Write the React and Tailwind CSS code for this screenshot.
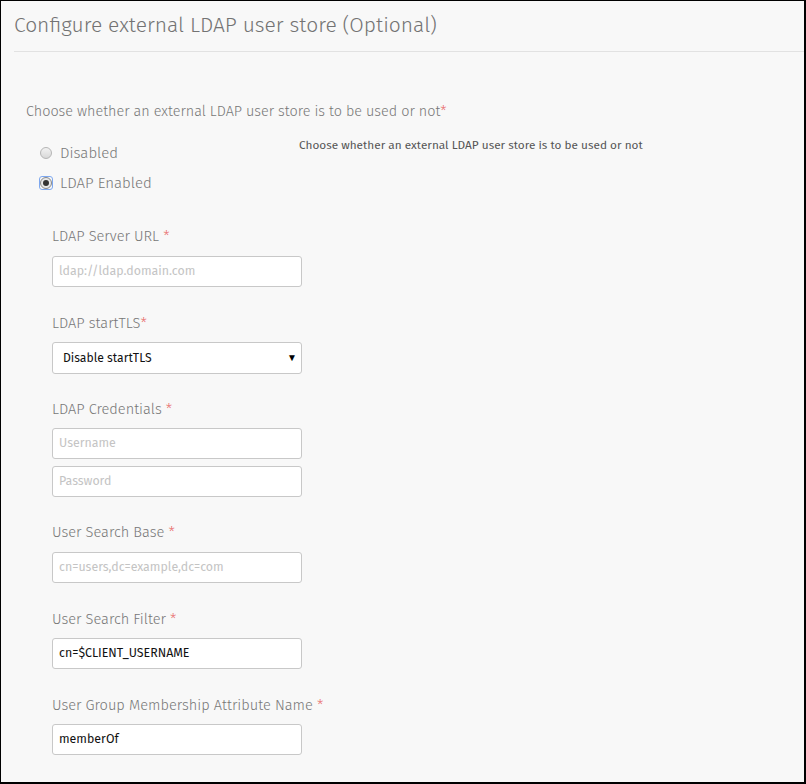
import React from "react";

const font = { fontFamily: '"Fira Sans", "Open Sans", "Noto Sans", sans-serif' };

function Label({ children, star = true, tight = false }) {
  return (
    <div className="text-[14.6px] leading-[20px] text-[#777] font-light">
      {children}
      {star && <span className="text-[#e86a6a]">{tight ? "*" : " *"}</span>}
    </div>
  );
}

function Input({ placeholder, value }) {
  return (
    <div className="w-[250px] h-[31px] bg-white border border-[#c8c8c8] rounded-[3px] flex items-center px-[6px] text-[12.4px]">
      {value ? (
        <span className="text-[#111]">{value}</span>
      ) : (
        <span className="text-[#c4c4c4]">{placeholder}</span>
      )}
    </div>
  );
}

export default function App() {
  return (
    <div
      className="w-[806px] h-[784px] bg-[#f8f8f8] border-l border-t border-r-2 border-b-2 border-black overflow-hidden box-border"
      style={font}
    >
      <div className="ml-[13px] border-b border-[#e2e2e2] h-[51px] pt-[10px]">
        <div className="text-[21px] leading-[28px] text-[#737373] font-light">
          Configure external LDAP user store (Optional)
        </div>
      </div>
      <div className="pl-[25px] pt-[50px]">
        <div className="text-[14.4px] leading-[20px] text-[#777] font-light">
          Choose whether an external LDAP user store is to be used or not
          <span className="text-[#e86a6a]">*</span>
        </div>
        <div className="flex mt-[16px]">
          <div className="w-[273px] pl-[14px]">
            <div className="flex items-center h-[30px] gap-[8px]">
              <div className="w-[12px] h-[12px] rounded-full border border-[#b5b5b5] bg-gradient-to-b from-[#f2f2f2] to-[#d8d8d8]" />
              <span className="text-[15px] text-[#777] font-light">Disabled</span>
            </div>
            <div className="flex items-center h-[30px] gap-[7px]">
              <div className="w-[14px] h-[14px] rounded-[3px] border border-[#7ea8ef] flex items-center justify-center -ml-[1px]">
                <div className="w-[12px] h-[12px] rounded-full border border-[#888] bg-[#e8e8e8] flex items-center justify-center">
                  <div className="w-[6px] h-[6px] rounded-full bg-[#333]" />
                </div>
              </div>
              <span className="text-[15px] text-[#777] font-light">LDAP Enabled</span>
            </div>
          </div>
          <div className="text-[11.8px] text-[#555] leading-[16px] -mt-[1px]">
            Choose whether an external LDAP user store is to be used or not
          </div>
        </div>
        <div className="pl-[26px] pt-[28px]">
          <Label>LDAP Server URL</Label>
          <div className="mt-[10px]"><Input placeholder="ldap://ldap.domain.com" /></div>
          <div className="mt-[26px]"><Label tight>LDAP startTLS</Label></div>
          <div className="mt-[9px] w-[250px] h-[32px] bg-white border border-[#c8c8c8] rounded-[3px] flex items-center justify-between pl-[10px] pr-[4px] text-[12.2px] text-[#111]">
            <span>Disable startTLS</span>
            <span className="text-[10px] text-black">▼</span>
          </div>
          <div className="mt-[25px]"><Label>LDAP Credentials</Label></div>
          <div className="mt-[9px]"><Input placeholder="Username" /></div>
          <div className="mt-[7px]"><Input placeholder="Password" /></div>
          <div className="mt-[25px]"><Label>User Search Base</Label></div>
          <div className="mt-[10px]"><Input placeholder="cn=users,dc=example,dc=com" /></div>
          <div className="mt-[26px]"><Label>User Search Filter</Label></div>
          <div className="mt-[9px]"><Input value="cn=$CLIENT_USERNAME" /></div>
          <div className="mt-[26px]"><Label>User Group Membership Attribute Name</Label></div>
          <div className="mt-[9px]"><Input value="memberOf" /></div>
        </div>
      </div>
    </div>
  );
}
